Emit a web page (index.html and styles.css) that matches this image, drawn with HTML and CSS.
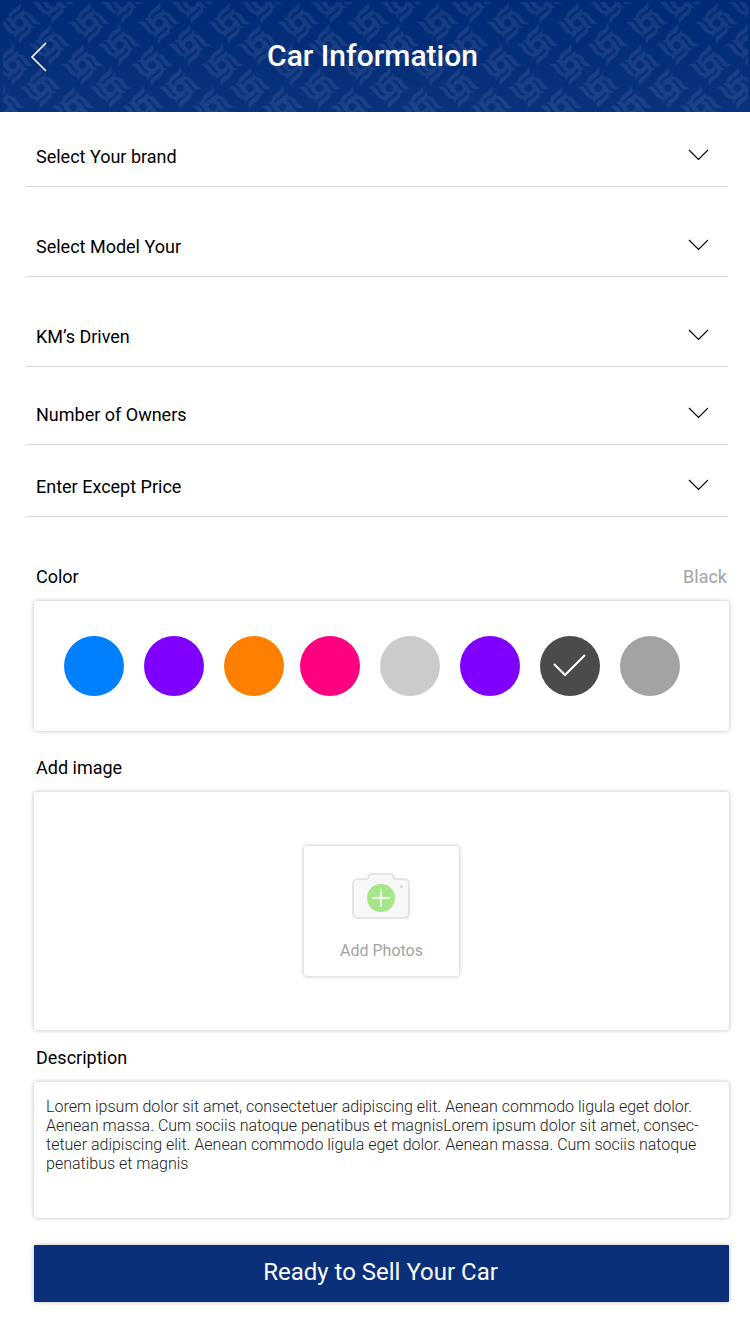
FILE: index.html
```
<!DOCTYPE html>
<html lang="en">
<head>
<meta charset="utf-8">
<meta name="viewport" content="width=device-width, initial-scale=1">
<title>Car Information</title>
<link rel="stylesheet" href="styles.css">
</head>
<body>
<header class="header">
  <svg class="header-pattern" aria-hidden="true">
    <defs>
      <g id="arm">
        <path d="M-11 0C-13-6-12-9-8-12C-4-15-2-16-1-20C2-15 0-12-4-10C-8-7-10-6-11 0Z"/>
        <path d="M-6 4C-8-2-7-5-4-7C0-10 2-10 3-14C6-9 4-6 0-4C-4-2-5-1-6 4Z"/>
      </g>
      <pattern id="wheels" width="69.7" height="44" patternUnits="userSpaceOnUse">
        <g transform="translate(35 22)" fill="#fff" opacity=".08">
          <use href="#arm" transform="translate(1 -1)"/>
          <use href="#arm" transform="rotate(90) translate(1 -1)"/>
          <use href="#arm" transform="rotate(180) translate(1 -1)"/>
          <use href="#arm" transform="rotate(270) translate(1 -1)"/>
        </g>
      </pattern>
      <rect id="row" width="4000" height="44" fill="url(#wheels)"/>
    </defs>
    <use href="#row" transform="translate(-55 -21)"/>
    <use href="#row" transform="translate(-88 -1)"/>
    <use href="#row" transform="translate(-58 21)"/>
    <use href="#row" transform="translate(-95 41)"/>
    <use href="#row" transform="translate(-67 64)"/>
    <use href="#row" transform="translate(-104 83)"/>
  </svg>
  <button class="back" type="button" aria-label="Back">
    <svg width="18" height="30" viewBox="0 0 18 30"><path d="M16 1 2 15 16 29"/></svg>
  </button>
  <h1 class="title">Car Information</h1>
</header>

<form class="form">
  <div class="fields">
    <div class="field">
      <select class="select" aria-label="Brand"><option>Select Your brand</option></select>
      <svg class="chevron" width="20" height="12" viewBox="0 0 20 12"><path d="M1 1 10.500 10.500 20 1"/></svg>
    </div>
    <div class="field field-spaced">
      <select class="select" aria-label="Model"><option>Select Model Your</option></select>
      <svg class="chevron" width="20" height="12" viewBox="0 0 20 12"><path d="M1 1 10.500 10.500 20 1"/></svg>
    </div>
    <div class="field field-spaced">
      <select class="select" aria-label="Kilometres driven"><option>KM’s Driven</option></select>
      <svg class="chevron" width="20" height="12" viewBox="0 0 20 12"><path d="M1 1 10.500 10.500 20 1"/></svg>
    </div>
    <div class="field field-medium">
      <select class="select" aria-label="Number of owners"><option>Number of Owners</option></select>
      <svg class="chevron" width="20" height="12" viewBox="0 0 20 12"><path d="M1 1 10.500 10.500 20 1"/></svg>
    </div>
    <div class="field field-tight">
      <select class="select" aria-label="Expected price"><option>Enter Except Price</option></select>
      <svg class="chevron" width="20" height="12" viewBox="0 0 20 12"><path d="M1 1 10.500 10.500 20 1"/></svg>
    </div>
  </div>

  <section class="section" role="radiogroup" aria-labelledby="color-heading">
    <div class="section-head">
      <h2 class="label" id="color-heading">Color</h2>
      <output class="value">Black</output>
    </div>
    <div class="card swatches">
      <div class="swatch-group">
        <label class="swatch blue"><input type="radio" name="color" aria-label="Blue"></label>
        <label class="swatch violet"><input type="radio" name="color" aria-label="Violet"></label>
        <label class="swatch orange"><input type="radio" name="color" aria-label="Orange"></label>
      </div>
      <div class="swatch-group">
        <label class="swatch pink"><input type="radio" name="color" aria-label="Pink"></label>
        <label class="swatch silver"><input type="radio" name="color" aria-label="Silver"></label>
        <label class="swatch violet"><input type="radio" name="color" aria-label="Purple"></label>
        <label class="swatch black"><input type="radio" name="color" aria-label="Black" checked>
          <svg class="tick" width="34" height="24" viewBox="0 0 34 24"><path d="M1 10 12 21 32 1"/></svg>
        </label>
        <label class="swatch gray"><input type="radio" name="color" aria-label="Gray"></label>
      </div>
    </div>
  </section>

  <section class="section section-photos">
    <h2 class="label">Add image</h2>
    <div class="card photos">
      <button class="card add-photo" type="button">
        <svg width="58" height="46" viewBox="0 0 58 46" fill="none">
          <path d="M6 6H14Q16.500 6 16.500 3.500Q17 1 19 1H39Q41 1 41.500 3.500Q41.500 6 44 6H52Q57 6 57 11V40Q57 45 52 45H6Q1 45 1 40V11Q1 6 6 6Z" fill="#f8f8f8" stroke="#e4e4e4" stroke-width="2"/>
          <rect x="48" y="12" width="3" height="3" rx="1" fill="#dedede"/>
          <circle cx="29" cy="25" r="14" fill="#a4e786"/>
          <path d="M20 25H38M29 16V34" stroke="#fff" stroke-width="2" stroke-opacity=".85"/>
        </svg>
        <span>Add Photos</span>
      </button>
    </div>
  </section>

  <section class="section">
    <label class="label" for="description">Description</label>
    <textarea class="card description" id="description">Lorem ipsum dolor sit amet, consectetuer adipiscing elit. Aenean commodo ligula eget dolor. Aenean massa. Cum sociis natoque penatibus et magnisLorem ipsum dolor sit amet, consec-tetuer adipiscing elit. Aenean commodo ligula eget dolor. Aenean massa. Cum sociis natoque penatibus et magnis</textarea>
  </section>

  <button class="submit" type="submit">Ready to Sell Your Car</button>
</form>
</body>
</html>
```
FILE: styles.css
```
* {
  box-sizing: border-box;
}

body {
  margin: 0;
  background: #fff;
  color: #000;
  font: 400 18px/24px Roboto, "Liberation Sans", sans-serif;
}

button,
select,
textarea {
  margin: 0;
  border: 0;
  font: inherit;
  color: inherit;
}

svg {
  display: block;
}

.header {
  position: relative;
  display: grid;
  grid-template-columns: 64px 1fr 69px;
  align-items: center;
  height: 112px;
  background: linear-gradient(#002a76, #0a327c);
}

/* Decorative layer behind the header content. */
.header-pattern {
  position: absolute;
  inset: 2px 2px 0 3px;
  width: calc(100% - 5px);
  height: 110px;
}

.back {
  position: relative;
  padding: 14px 4px 12px 30px;
  background: none;
}

.back path {
  fill: none;
  stroke: #fff;
  stroke-width: 1.6;
}

.title {
  position: relative;
  margin: 0;
  color: #fff;
  font-size: 30px;
  font-weight: 500;
  line-height: 36px;
  text-align: center;
}

.form {
  padding: 15px 21px 32px 34px;
}

.fields {
  margin: 0 1px 48px -8px;
}

.field {
  display: grid;
  align-items: center;
  border-bottom: 1px solid #d8d8d8;
}

.field-spaced {
  margin-top: 30px;
}

.field-medium {
  margin-top: 18px;
}

.field-tight {
  margin-top: 12px;
}

.select,
.chevron {
  grid-area: 1 / 1;
}

.select {
  width: 100%;
  height: 59px;
  padding: 0 44px 0 10px;
  appearance: none;
  background: none;
}

.chevron {
  justify-self: end;
  margin: 0 20px 4px 0;
  pointer-events: none;
}

.chevron path {
  fill: none;
  stroke: #000;
  stroke-width: 1.2;
}

.section {
  margin-bottom: 25px;
}

.section-photos {
  margin-bottom: 16px;
}

.section-head {
  display: flex;
  justify-content: space-between;
  padding-right: 2px;
}

.label {
  display: block;
  margin: 0 0 12px;
  padding-left: 2px;
  font-size: 18px;
  font-weight: 400;
}

.value {
  color: #a3a3a3;
}

.card {
  border-radius: 3px;
  background: #fff;
  box-shadow: 0 0 4px rgba(0, 0, 0, .28);
}

.swatches {
  display: flex;
  flex-wrap: wrap;
  gap: 16px;
  padding: 35px 30px;
}

.swatch-group {
  display: flex;
  flex-wrap: wrap;
  gap: 20px;
}

.swatch {
  display: grid;
  place-items: center;
  width: 60px;
  height: 60px;
  border-radius: 50%;
  cursor: pointer;
}

.swatch input {
  grid-area: 1 / 1;
  width: 100%;
  height: 100%;
  margin: 0;
  border-radius: 50%;
  appearance: none;
}

.tick {
  grid-area: 1 / 1;
}

.tick path {
  fill: none;
  stroke: #fff;
  stroke-width: 2;
}

.blue {
  background: #0080ff;
}

.violet {
  background: #8000ff;
}

.orange {
  background: #ff8000;
}

.pink {
  background: #ff0080;
}

.silver {
  background: #cbcbcb;
}

.black {
  background: #4b4b4b;
}

.gray {
  background: #a3a3a3;
}

.photos {
  display: grid;
  place-items: center;
  padding: 54px 20px;
}

.add-photo {
  display: flex;
  flex-direction: column;
  align-items: center;
  gap: 20px;
  padding: 27px 36px 13px;
  color: #a3a3a3;
  font-size: 16px;
}

.description {
  display: block;
  width: 100%;
  height: 136px;
  padding: 15px 12px;
  resize: none;
  color: #222;
  font-size: 16px;
  font-weight: 300;
  line-height: 19px;
}

.submit {
  display: block;
  width: 100%;
  margin-top: 27px;
  padding: 13px 2px 16px 0;
  border-radius: 1px;
  background: #0a307a;
  box-shadow: 0 0 4px rgba(0, 0, 0, .28);
  color: #fff;
  font-size: 24px;
  line-height: 28px;
}
```
